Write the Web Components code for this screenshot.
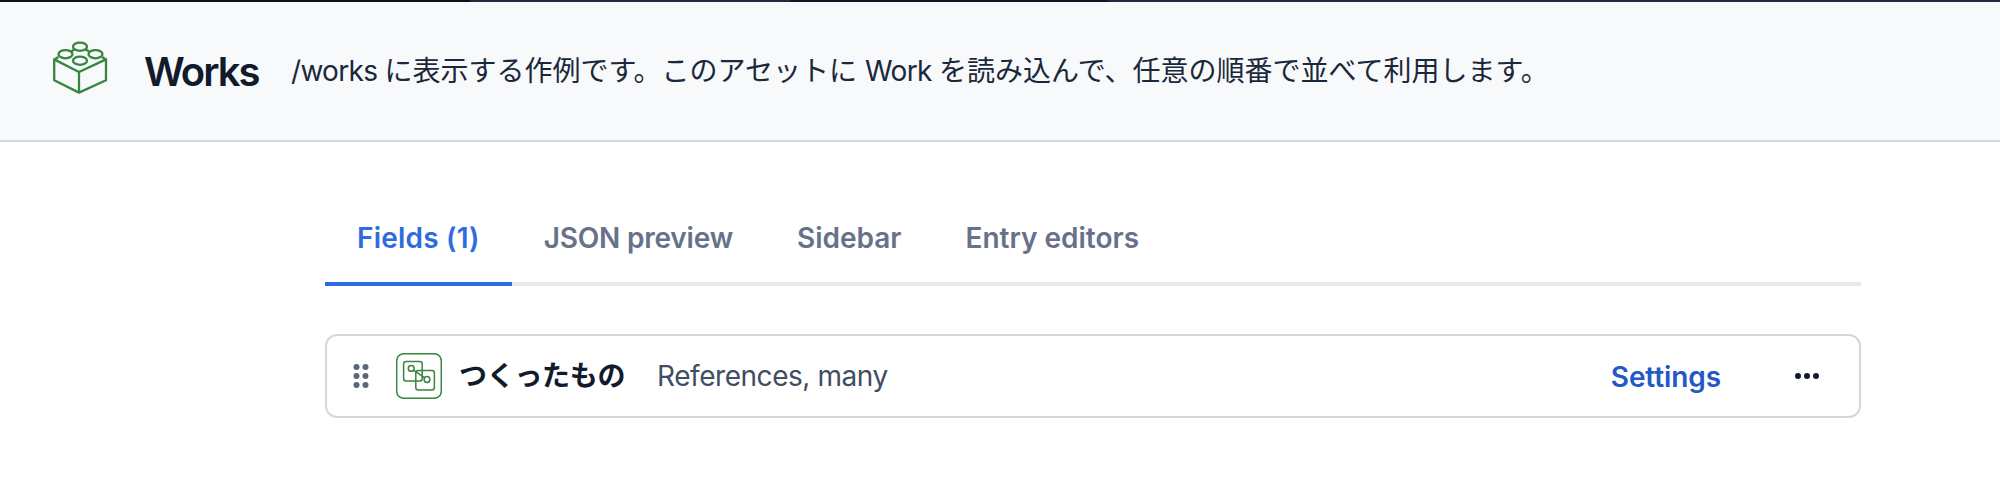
<!DOCTYPE html>
<html lang="ja">
<head>
<meta charset="utf-8">
<title>Works</title>
<style>
html, body { margin: 0; height: 100%; background: #fff; overflow: hidden; }
body { font-family: Inter, "Noto Sans CJK JP", sans-serif; font-size: 28px; color: #111b2b; }
</style>
</head>
<body>
<model-page></model-page>
<script>
function define(name, html) {
  const t = document.createElement('template');
  t.innerHTML = html;
  customElements.define(name, class extends HTMLElement {
    constructor() {
      super();
      this.attachShadow({ mode: 'open' }).append(t.content.cloneNode(true));
    }
  });
}

define('brick-icon', `
<style>:host{display:block;width:56px;height:54px} svg{display:block}</style>
<svg width="56" height="54" viewBox="52 41 56 54" fill="none" stroke="#37853e" stroke-width="2.3">
  <path d="M54.2 59.4V80.2L79 92.6L106 80.2V59.4L79 72Z M79 72V92.6" stroke-linejoin="round"/>
  <path d="M54.2 59.4L58.5 57 M71.5 51L74.4 49.6 M85.6 49.6L89 51.2 M102 57L106 59.4"/>
  <ellipse cx="80" cy="46.7" rx="7" ry="4.1"/><ellipse cx="65.5" cy="54.2" rx="7" ry="4.1"/>
  <ellipse cx="95.5" cy="54.2" rx="7" ry="4.1"/><ellipse cx="80" cy="60.7" rx="7" ry="4.1"/>
</svg>`);

define('reference-icon', `
<style>:host{display:block;width:46px;height:46px} svg{display:block}</style>
<svg width="46" height="46" viewBox="0 0 46 46" fill="none" stroke="#37853e" stroke-width="1.5">
  <rect x=".7" y=".7" width="44.6" height="44.6" rx="7"/>
  <rect x="7.6" y="8.5" width="18.6" height="19.6" rx="2.5"/>
  <rect x="19.8" y="17.4" width="18.6" height="19.6" rx="2.5"/>
  <circle cx="15.2" cy="15.4" r="2.9"/><circle cx="31" cy="26.5" r="2.9"/>
  <path d="M17.5 17.2L28.7 24.8"/>
</svg>`);

define('drag-handle', `
<style>:host{display:block} svg{display:block}</style>
<svg width="16" height="24" viewBox="0 0 16 24" fill="#5a657c">
  <circle cx="3.5" cy="3" r="3"/><circle cx="12.5" cy="3" r="3"/>
  <circle cx="3.5" cy="12" r="3"/><circle cx="12.5" cy="12" r="3"/>
  <circle cx="3.5" cy="21" r="3"/><circle cx="12.5" cy="21" r="3"/>
</svg>`);

define('more-button', `
<style>:host{display:block} svg{display:block}</style>
<svg width="24" height="6" viewBox="0 0 24 6" fill="#111b2b">
  <circle cx="3" cy="3" r="3"/><circle cx="12" cy="3" r="3"/><circle cx="21" cy="3" r="3"/>
</svg>`);

define('model-header', `
<style>
:host{display:block;box-sizing:border-box;height:142px;background:#f7f9fa;border-bottom:2px solid #cfd9e0}
.strip{height:2px;background:linear-gradient(90deg,#0c111c 470px,#1f2a3c 470px 790px,#111726 790px 1108px,#1f2a3c 1108px)}
.bar{display:flex;height:138px;align-items:flex-start;white-space:nowrap}
brick-icon{margin:39px 0 0 52px}
.title{margin:46px 0 0 36px;width:147px;line-height:48px;font-size:40px;font-weight:600;letter-spacing:-2px}
.desc{margin-top:49px;line-height:40px;color:#1b273a}
</style>
<div class="strip"></div>
<div class="bar"><brick-icon></brick-icon>
<div class="title"><slot name="title"></slot></div>
<div class="desc"><slot></slot></div></div>`);

define('tab-item', `
<style>
:host{display:block;box-sizing:border-box;height:100%;padding:21px 32px 0;line-height:34px;font-weight:600;color:#67728a;white-space:nowrap}
:host([active]){color:#2e6be0;box-shadow:inset 0 -4px #2e6be0}
</style><slot></slot>`);

define('tab-bar', `
<style>:host{display:flex;height:86px;box-shadow:inset 0 -4px #e7ebee}</style><slot></slot>`);

define('field-card', `
<style>
:host{display:flex;box-sizing:border-box;height:84px;border:2px solid #cfd9e0;border-radius:12px;align-items:center;white-space:nowrap;padding:0 40px 0 26px}
reference-icon{margin-left:27px}
.name{margin-left:17px;width:198px;line-height:40px;font-weight:700;letter-spacing:-.3px}
.type{color:#414d63;line-height:34px;letter-spacing:-.45px}
.settings{margin-left:auto;margin-right:74px;color:#2359c4;font-weight:600;line-height:34px;padding-top:2px;letter-spacing:-.1px}
</style>
<drag-handle></drag-handle><reference-icon></reference-icon>
<div class="name"><slot name="name"></slot></div>
<div class="type"><slot name="type"></slot></div>
<div class="settings">Settings</div>
<more-button></more-button>`);

define('model-page', `
<style>
:host{display:block}
main{width:1536px;margin:58px 0 0 325px}
field-card{margin-top:48px}
.path{letter-spacing:-.7px}
.model{letter-spacing:-.6px}
.fields{letter-spacing:.2px}
.json{letter-spacing:-.2px}
</style>
<model-header><span slot="title">Works</span><span class="path">/works </span>に表示する作例です。このアセットに <span class="model">Work </span>を読み込んで、任意の順番で並べて利用します。</model-header>
<main>
<tab-bar><tab-item class="fields" active>Fields (1)</tab-item><tab-item class="json">JSON preview</tab-item><tab-item>Sidebar</tab-item><tab-item>Entry editors</tab-item></tab-bar>
<field-card><span slot="name">つくったもの</span><span slot="type">References, many</span></field-card>
</main>`);
</script>
</body>
</html>
